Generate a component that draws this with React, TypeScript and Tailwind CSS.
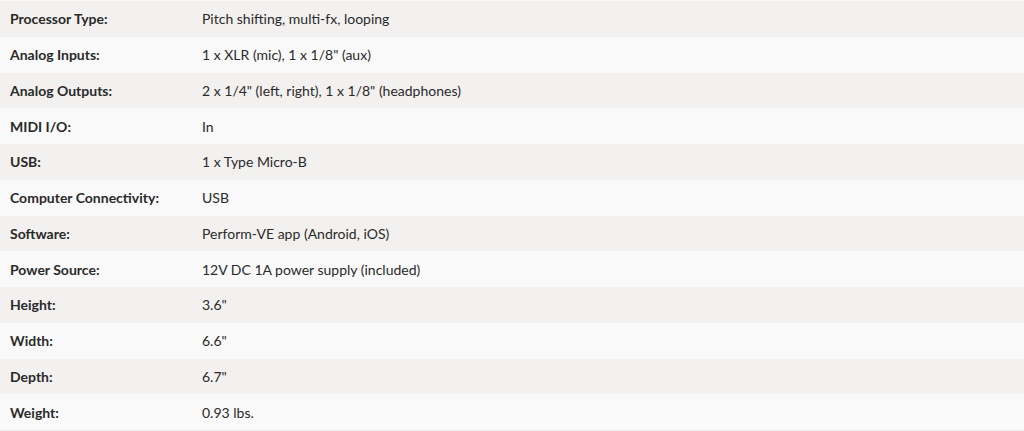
import React from 'react';

const specs: [string, string][] = [
  ['Processor Type:', 'Pitch shifting, multi-fx, looping'],
  ['Analog Inputs:', '1 x XLR (mic), 1 x 1/8" (aux)'],
  ['Analog Outputs:', '2 x 1/4" (left, right), 1 x 1/8" (headphones)'],
  ['MIDI I/O:', 'In'],
  ['USB:', '1 x Type Micro-B'],
  ['Computer Connectivity:', 'USB'],
  ['Software:', 'Perform-VE app (Android, iOS)'],
  ['Power Source:', '12V DC 1A power supply (included)'],
  ['Height:', '3.6"'],
  ['Width:', '6.6"'],
  ['Depth:', '6.7"'],
  ['Weight:', '0.93 lbs.'],
];

function App() {
  return (
    <div className="min-h-screen bg-white font-['Lato','Liberation_Sans',sans-serif] text-[14px] text-[#2a2a2a]">
      <div className="border-t border-[#f7f7f7] border-b border-b-[#ececec]">
        {specs.map(([label, value], i) => (
          <div
            key={label}
            className={`flex h-[35.75px] items-center ${i % 2 === 0 ? 'bg-[#f2f1ef]' : 'bg-[#f9f9f9]'}`}
          >
            <div className="w-[202px] shrink-0 pl-[10px] font-bold">{label}</div>
            <div>{value}</div>
          </div>
        ))}
      </div>
    </div>
  );
}

export default App;
